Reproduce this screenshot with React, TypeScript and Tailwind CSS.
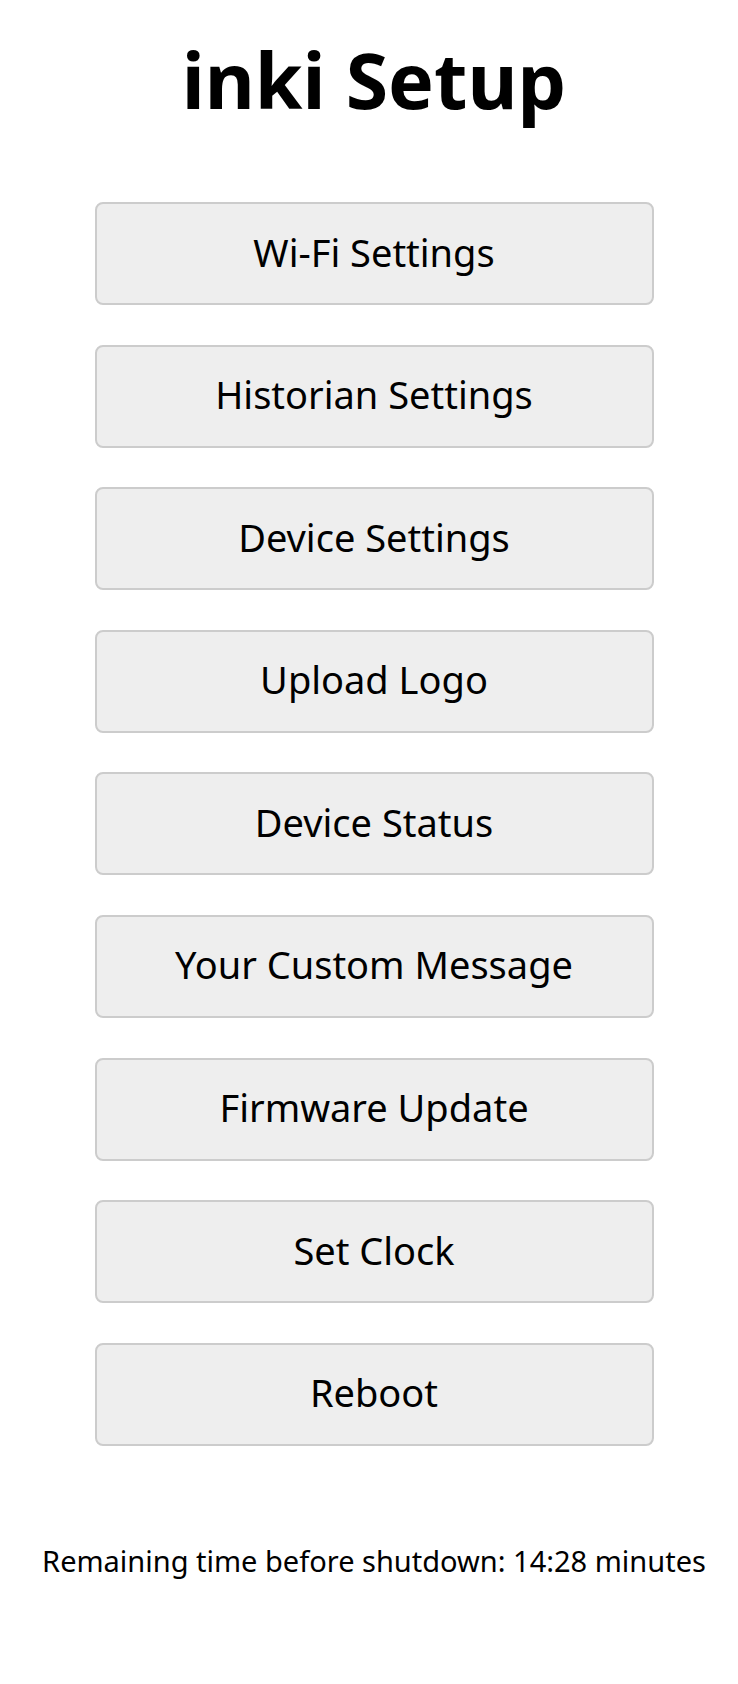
const items = [
  "Wi-Fi Settings",
  "Historian Settings",
  "Device Settings",
  "Upload Logo",
  "Device Status",
  "Your Custom Message",
  "Firmware Update",
  "Set Clock",
  "Reboot",
];

export default function App() {
  return (
    <div className="min-h-[1684px] bg-white text-black font-['Noto_Sans',sans-serif] flex flex-col items-center pl-[10px]">
      {/* title */}
      <h1 className="mt-[27px] text-[77px] font-bold leading-[normal]">inki Setup</h1>

      {/* menu */}
      <div className="mt-[70px] flex flex-col gap-[39.6px]">
        {items.map((label) => (
          <button
            key={label}
            className="w-[559px] h-[103px] pb-[4px] bg-[#eeeeee] border-2 border-[#cccccc] rounded-[8px] text-[38px] leading-[normal] text-black"
          >
            {label}
          </button>
        ))}
      </div>

      <p className="mt-[95px] text-[29px] leading-[normal]">
        Remaining time before shutdown: 14:28 minutes
      </p>
    </div>
  );
}
